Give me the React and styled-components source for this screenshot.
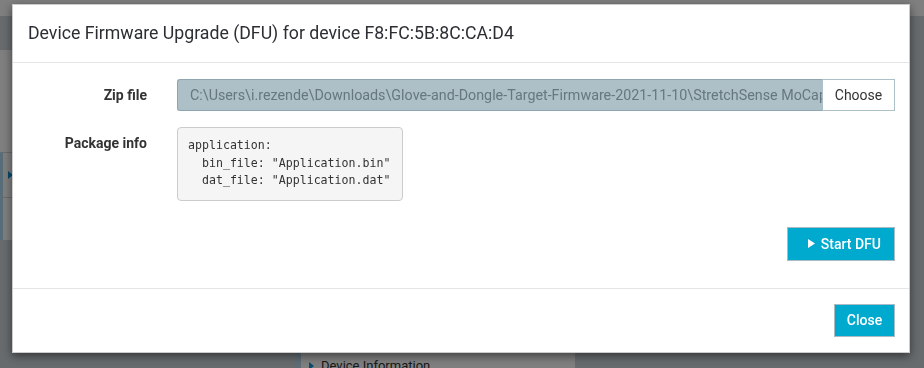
import styled, { createGlobalStyle } from 'styled-components';

const Global = createGlobalStyle`
    html, body {
        margin: 0;
        padding: 0;
    }
    body {
        font-family: Roboto, "Liberation Sans", Arial, sans-serif;
        font-size: 14px;
        color: #333;
        overflow: hidden;
    }
    * {
        box-sizing: border-box;
    }
`;

const Page = styled.div`
    width: 924px;
    height: 368px;
    background: #cfd7dd;
    overflow: hidden;
`;

const TopBar = styled.div`
    height: 16px;
    background: #fff;
`;

const Workspace = styled.div`
    display: flex;
    align-items: flex-start;
`;

const Sidebar = styled.div`
    width: 280px;
    margin-top: 34px;
    background: #fff;
`;

const SidebarHead = styled.div`
    height: 102px;
`;

const SidebarItem = styled.div`
    display: flex;
    align-items: center;
    height: ${(props) => props.h}px;
    padding-left: 5px;
    border-top: 1px solid #d6d6d6;
    border-left: 3px solid #b2dbf3;
    background: #fff;
    font-size: 13px;
`;

const DetailColumn = styled.div`
    width: 280px;
    margin-left: 15px;
    padding-top: 330px;
`;

const Card = styled.div`
    background: #fff;
    border-left: 6px solid #bcd9ec;
    height: 60px;
`;

const CardItem = styled.div`
    display: flex;
    align-items: center;
    gap: 7px;
    padding: 12px 0 0 8px;
    font-size: 13px;
    color: #333;
`;

const Caret = ({ color = '#1497dc', w = 5, h = 8 }) => (
    <svg width={w} height={h} viewBox={`0 0 ${w} ${h}`}>
        <polygon points={`0,0 ${w},${h / 2} 0,${h}`} fill={color} />
    </svg>
);

const Backdrop = styled.div`
    position: fixed;
    inset: 0;
    background: rgba(0, 0, 0, 0.5);
`;

const Modal = styled.div`
    position: fixed;
    top: 4px;
    left: 12px;
    width: 898px;
    background: #fff;
    border: 1px solid rgba(0, 0, 0, 0.2);
    box-shadow: 0 3px 9px rgba(0, 0, 0, 0.5);
`;

const Header = styled.div`
    padding: 15px 14px 15px 15px;
    border-bottom: 1px solid #e5e5e5;
`;

const Title = styled.h4`
    margin: 0;
    font-size: 17.7px;
    font-weight: 400;
    line-height: 27px;
    color: #2b2f33;
`;

const Body = styled.div`
    padding: 16px 14px 27px 15px;
    display: flex;
    flex-direction: column;
    gap: 16px;
`;

const FieldRow = styled.div`
    display: grid;
    grid-template-columns: 119px minmax(0, 1fr);
    column-gap: 30px;
    align-items: start;
`;

const Label = styled.label`
    text-align: right;
    font-weight: 700;
    line-height: 20px;
    padding-top: 6px;
    color: #333;
`;

const InputGroup = styled.div`
    display: flex;
    min-width: 0;
    height: 32px;
`;

const PathInput = styled.div`
    flex: 1;
    min-width: 0;
    display: flex;
    align-items: center;
    padding: 0 12px;
    background: #adbfc7;
    border: 1px solid #8fa5af;
    border-right: none;
    border-radius: 3px 0 0 3px;
    color: #66777f;
    font-size: 14.3px;
    white-space: nowrap;
    overflow: hidden;
`;

const ChooseButton = styled.button`
    flex: none;
    width: 73px;
    height: 32px;
    background: #fff;
    border: 1px solid #adc0c8;
    font-family: inherit;
    font-size: 14px;
    color: #333;
    padding: 0;
`;

const Pre = styled.pre`
    margin: 0;
    width: 226px;
    padding: 9px 10px 10px;
    background: #f5f5f5;
    border: 1px solid #ccc;
    border-radius: 4px;
    font-family: "DejaVu Sans Mono", "Liberation Mono", monospace;
    font-size: 11.6px;
    line-height: 17.5px;
    color: #333;
`;

const Actions = styled.div`
    display: flex;
    justify-content: flex-end;
    margin-top: 10px;
`;

const Button = styled.button`
    display: flex;
    align-items: center;
    justify-content: ${(props) => (props.icon ? 'flex-end' : 'center')};
    gap: 6px;
    height: ${(props) => props.h}px;
    width: ${(props) => props.w}px;
    padding: ${(props) => (props.icon ? '0 13px 0 0' : '0')};
    background: #00a9ce;
    border: 1px solid #a9bcc5;
    color: #fff;
    font-family: inherit;
    font-size: 14px;
    font-weight: 500;
`;

const Footer = styled.div`
    display: flex;
    justify-content: flex-end;
    padding: 15px 14px 15px 15px;
    border-top: 1px solid #e5e5e5;
`;

export default function App() {
    return (
        <>
            <Global />
            <Page>
                <TopBar />
                <Workspace>
                    <Sidebar>
                        <SidebarHead />
                        <SidebarItem h={45}>
                            <Caret />
                        </SidebarItem>
                        <SidebarItem h={43} />
                    </Sidebar>
                    <DetailColumn>
                        <Card>
                            <CardItem>
                                <Caret />
                                Device Information
                            </CardItem>
                        </Card>
                    </DetailColumn>
                </Workspace>
            </Page>
            <Backdrop />
            <Modal>
                <Header>
                    <Title>Device Firmware Upgrade (DFU) for device F8:FC:5B:8C:CA:D4</Title>
                </Header>
                <Body>
                    <FieldRow>
                        <Label>Zip file</Label>
                        <InputGroup>
                            <PathInput>
                                C:\Users\i.rezende\Downloads\Glove-and-Dongle-Target-Firmware-2021-11-10\StretchSense MoCap Pro
                            </PathInput>
                            <ChooseButton>Choose</ChooseButton>
                        </InputGroup>
                    </FieldRow>
                    <FieldRow>
                        <Label>Package info</Label>
                        <Pre>{'application:\n  bin_file: "Application.bin"\n  dat_file: "Application.dat"'}</Pre>
                    </FieldRow>
                    <Actions>
                        <Button w={108} h={34} icon>
                            <Caret color="#fff" w={7} h={9} />
                            Start DFU
                        </Button>
                    </Actions>
                </Body>
                <Footer>
                    <Button w={61} h={33}>Close</Button>
                </Footer>
            </Modal>
        </>
    );
}
